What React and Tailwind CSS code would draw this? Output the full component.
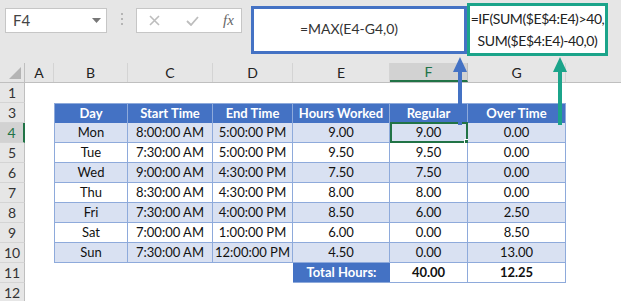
import React from "react";

const F = { fontFamily: "Lato, 'Liberation Sans', sans-serif" };

const colW = ["w-[29px]", "w-[74px]", "w-[85px]", "w-[80px]", "w-[97px]", "w-[78px]", "w-[98px]", "w-[60px]"];
const letters = ["A", "B", "C", "D", "E", "F", "G", ""];

const data = [
  ["Mon", "8:00:00 AM", "5:00:00 PM", "9.00", "9.00", "0.00"],
  ["Tue", "7:30:00 AM", "5:00:00 PM", "9.50", "9.50", "0.00"],
  ["Wed", "9:00:00 AM", "4:30:00 PM", "7.50", "7.50", "0.00"],
  ["Thu", "8:30:00 AM", "4:30:00 PM", "8.00", "8.00", "0.00"],
  ["Fri", "7:30:00 AM", "4:00:00 PM", "8.50", "6.00", "2.50"],
  ["Sat", "7:00:00 AM", "1:00:00 PM", "6.00", "0.00", "8.50"],
  ["Sun", "7:30:00 AM", "12:00:00 PM", "4.50", "0.00", "13.00"],
];
const heads = ["Day", "Start Time", "End Time", "Hours Worked", "Regular", "Over Time"];

function RowHead({ n, active }) {
  return (
    <div
      className={
        "w-[25px] shrink-0 h-full flex items-center justify-center text-[14px] border-b border-[#d4d4d4] " +
        (active
          ? "bg-[#d2d2d2] text-[#217346] border-r-2 border-r-[#217346]"
          : "bg-[#e6e6e6] text-[#333] border-r border-r-[#bfbfbf]")
      }
    >
      {n}
    </div>
  );
}

function Blank({ i }) {
  return <div className={colW[i] + " shrink-0 h-full bg-white"} />;
}

export default function App() {
  return (
    <div className="relative w-[621px] h-[301px] overflow-hidden bg-white text-[13px]" style={F}>
      {/* toolbar */}
      <div className="relative h-[63px] bg-[#e6e6e6] flex items-start">
        <div className="mt-[8px] ml-[5px] w-[102px] h-[25px] bg-white border border-[#c6c6c6] flex items-center pl-[7px] pr-[5px]">
          <span className="text-[15px] text-[#444] flex-1">F4</span>
          <svg width="9" height="5" viewBox="0 0 9 5"><path d="M0 0h9L4.5 5z" fill="#777" /></svg>
        </div>
        <div className="mt-[13px] ml-[14px] flex flex-col gap-[3px]">
          <div className="w-[2px] h-[2px] bg-[#b5b5b5]" />
          <div className="w-[2px] h-[2px] bg-[#b5b5b5]" />
          <div className="w-[2px] h-[2px] bg-[#b5b5b5]" />
        </div>
        <div className="mt-[8px] ml-[13px] w-[106px] h-[25px] bg-white border border-[#c6c6c6] flex items-center pl-[12px]">
          <svg width="11" height="11" viewBox="0 0 11 11"><path d="M1 1L10 10M10 1L1 10" stroke="#bdbdbd" strokeWidth="1.6" /></svg>
          <svg className="ml-[26px]" width="13" height="10" viewBox="0 0 13 10"><path d="M1 5L5 9L12 1" stroke="#bdbdbd" strokeWidth="1.8" fill="none" /></svg>
          <span className="ml-[24px] italic text-[15px] text-[#666]" style={{ fontFamily: "'Liberation Serif', serif" }}>fx</span>
        </div>
        <div className="mt-[6px] ml-[9px] w-[216px] h-[48px] bg-white border-[3px] border-[#4472c4] flex items-center justify-center pr-[20px] pb-[4px]">
          <span className="text-[14px] text-[#333]">=MAX(E4-G4,0)</span>
        </div>
        <div className="mt-[3px] w-[141px] h-[53px] bg-white border-[3px] border-[#1ba48a] flex flex-col items-center justify-center leading-[22px] text-[14px] tracking-[-0.4px] text-[#222]">
          <span>=IF(SUM($E$4:E4)&gt;40,</span>
          <span>SUM($E$4:E4)-40,0)</span>
        </div>
      </div>

      {/* column headers */}
      <div className="flex h-[20px] bg-[#e6e6e6] border-b border-[#bfbfbf]">
        <div className="w-[25px] shrink-0 h-full border-r border-[#bfbfbf] flex items-end justify-end p-[3px]">
          <svg width="12" height="12" viewBox="0 0 12 12"><path d="M12 0V12H0z" fill="#b4b4b4" /></svg>
        </div>
        {letters.map((l, i) => (
          <div
            key={i}
            className={
              colW[i] +
              " shrink-0 h-full flex items-center justify-center text-[14px] " +
              (l === "F"
                ? "bg-[#d2d2d2] text-[#217346] border-b-2 border-[#217346] border-r border-r-[#bfbfbf]"
                : "text-[#222] border-r border-[#d4d4d4]")
            }
          >
            {l}
          </div>
        ))}
      </div>

      {/* row 1 */}
      <div className="flex h-[20px]">
        <RowHead n="1" />
      </div>

      {/* row 3 header */}
      <div className="flex h-[20px]">
        <RowHead n="3" />
        <Blank i={0} />
        {heads.map((h, j) => (
          <div
            key={j}
            className={
              colW[j + 1] +
              " shrink-0 h-full bg-[#4472c4] text-white font-bold text-[13px] flex items-center justify-center whitespace-nowrap border-r border-t border-[#8eaadb] " +
              (j === 0 ? "border-l" : "")
            }
          >
            {h}
          </div>
        ))}
      </div>

      {data.map((row, r) => (
        <div key={r} className="flex h-[20px]">
          <RowHead n={String(r + 4)} active={r === 0} />
          <Blank i={0} />
          {row.map((v, j) => (
            <div
              key={j}
              className={
                colW[j + 1] +
                " relative shrink-0 h-full flex items-center justify-center whitespace-nowrap text-[13px] text-[#111] border-r border-b border-[#8eaadb] " +
                (r % 2 === 0 ? "bg-[#d9e1f2] " : "bg-white ") +
                (j === 0 ? "border-l" : "")
              }
            >
              {v}
              {r === 0 && j === 4 && (
                <>
                  <div className="absolute left-0 top-[-1px] right-[-1px] bottom-[-1px] border-2 border-[#217346]" />
                  <div className="absolute right-[-3px] bottom-[-3px] w-[6px] h-[6px] bg-[#217346] border border-white" />
                </>
              )}
            </div>
          ))}
        </div>
      ))}

      {/* row 11 */}
      <div className="flex h-[20px]">
        <RowHead n="11" />
        <Blank i={0} />
        <Blank i={1} />
        <Blank i={2} />
        <Blank i={3} />
        <div className="w-[97px] shrink-0 h-full bg-[#4472c4] text-white font-bold text-[13px] flex items-center justify-center whitespace-nowrap border-b border-[#8eaadb]">
          Total Hours:
        </div>
        <div className="w-[78px] shrink-0 h-full bg-white font-bold text-[13px] text-[#111] flex items-center justify-center border-r border-b border-[#8eaadb]">
          40.00
        </div>
        <div className="w-[98px] shrink-0 h-full bg-white font-bold text-[13px] text-[#111] flex items-center justify-center border-r border-b border-[#8eaadb]">
          12.25
        </div>
      </div>

      {/* row 12 */}
      <div className="flex h-[20px]">
        <RowHead n="12" />
      </div>

      {/* arrows */}
      <svg className="absolute left-0 top-0 pointer-events-none" width="621" height="301" viewBox="0 0 621 301">
        <rect x="458" y="70" width="4" height="55" fill="#4472c4" />
        <path d="M453 72H467L460 57z" fill="#4472c4" />
        <rect x="558" y="70" width="4" height="55" fill="#1ba48a" />
        <path d="M553 72H567L560 57z" fill="#1ba48a" />
      </svg>
    </div>
  );
}
